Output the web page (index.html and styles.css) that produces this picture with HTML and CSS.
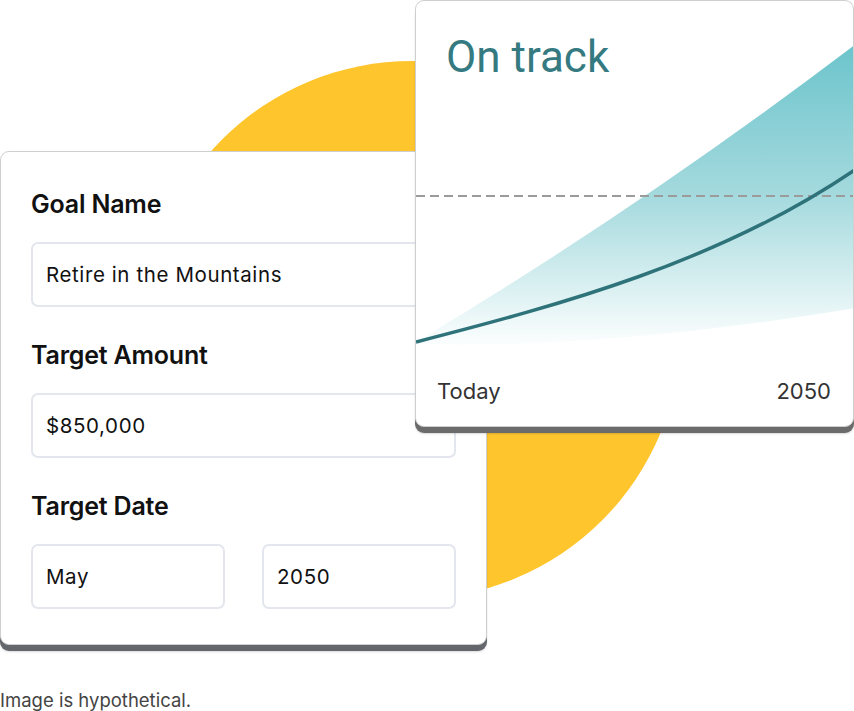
FILE: index.html
```html
<!DOCTYPE html>
<html lang="en">
<head>
<meta charset="utf-8">
<title>Goal</title>
<link rel="stylesheet" href="styles.css">
</head>
<body>
<div class="scene">
  <div class="sun"></div>
  <div class="form-card">
    <div class="field">
      <div class="label">Goal Name</div>
      <div class="input">Retire in the Mountains</div>
    </div>
    <div class="field">
      <div class="label">Target Amount</div>
      <div class="input">$850,000</div>
    </div>
    <div class="field">
      <div class="label">Target Date</div>
      <div class="row">
        <div class="input">May</div>
        <div class="input">2050</div>
      </div>
    </div>
  </div>
  <div class="chart-card">
    <svg class="chart" viewBox="416 1 437 425" width="437" height="425" aria-hidden="true">
      <defs>
        <linearGradient id="band" gradientUnits="userSpaceOnUse" x1="0" y1="45" x2="0" y2="350">
          <stop offset="0" stop-color="#6cc4cc"/>
          <stop offset="0.5" stop-color="#a5dade"/>
          <stop offset="1" stop-color="#ffffff"/>
        </linearGradient>
      </defs>
      <path d="M416,342 Q640,208 856,44 L856,308 Q600,350 416,344 Z" fill="url(#band)"/>
      <line x1="416" y1="196" x2="856" y2="196" stroke="#9b9b9b" stroke-width="2" stroke-dasharray="9 5"/>
      <path d="M416,342 C560,305 720,262 856,169" fill="none" stroke="#2f737a" stroke-width="3.5"/>
    </svg>
    <div class="title">On track</div>
    <div class="axis"><span>Today</span><span>2050</span></div>
  </div>
</div>
<p class="caption">Image is hypothetical.</p>
</body>
</html>
```
FILE: styles.css
```css
html, body {
  margin: 0;
  padding: 0;
  background: #ffffff;
}
body {
  font-family: Inter, "Liberation Sans", sans-serif;
  color: #111111;
  width: 854px;
  height: 711px;
  overflow: hidden;
}
.scene {
  position: relative;
  height: 652px;
  padding-top: 151px;
  box-sizing: border-box;
}
.sun {
  position: absolute;
  left: 143px;
  top: 61px;
  width: 538px;
  height: 538px;
  border-radius: 50%;
  background: #fec52d;
}
.form-card {
  position: relative;
  width: 487px;
  height: 494px;
  box-sizing: border-box;
  background: #ffffff;
  border: 1px solid #cfcfcf;
  border-radius: 9px;
  box-shadow: 0 6px 0 #63676c, 0 7px 2px rgba(0,0,0,0.15);
  padding: 37px 30px 0 30px;
  display: flex;
  flex-direction: column;
  gap: 33px;
}
.label {
  font-size: 25px;
  line-height: 30px;
  font-weight: 600;
  letter-spacing: -0.2px;
  color: #111111;
  margin-bottom: 23px;
}
.input {
  height: 65px;
  box-sizing: border-box;
  border: 2px solid #e3e6ed;
  border-radius: 7px;
  padding-left: 13px;
  display: flex;
  align-items: center;
  font-size: 20.5px;
  letter-spacing: 0.6px;
  color: #111111;
}
.row {
  display: flex;
  gap: 37px;
}
.row .input {
  flex: 1;
}
.chart-card {
  position: absolute;
  top: 0;
  left: 415px;
  width: 439px;
  height: 427px;
  box-sizing: border-box;
  background: #ffffff;
  border: 1px solid #cfcfcf;
  border-radius: 9px;
  box-shadow: 0 6px 0 #6b6b6b, 0 7px 2px rgba(0,0,0,0.15);
  overflow: hidden;
  display: grid;
  grid-template: 1fr / 1fr;
}
.chart {
  grid-area: 1 / 1;
  display: block;
}
.title {
  grid-area: 1 / 1;
  align-self: start;
  font-family: Roboto, "Liberation Sans", sans-serif;
  font-size: 44px;
  line-height: 52px;
  color: #357a80;
  padding: 30px 0 0 30px;
}
.axis {
  grid-area: 1 / 1;
  align-self: end;
  display: flex;
  justify-content: space-between;
  padding: 0 22px 22px 21px;
  font-size: 22px;
  line-height: 26px;
  color: #333333;
}
.caption {
  margin: 36px 0 0 0;
  font-size: 18.5px;
  line-height: 24px;
  color: #444444;
}
```
